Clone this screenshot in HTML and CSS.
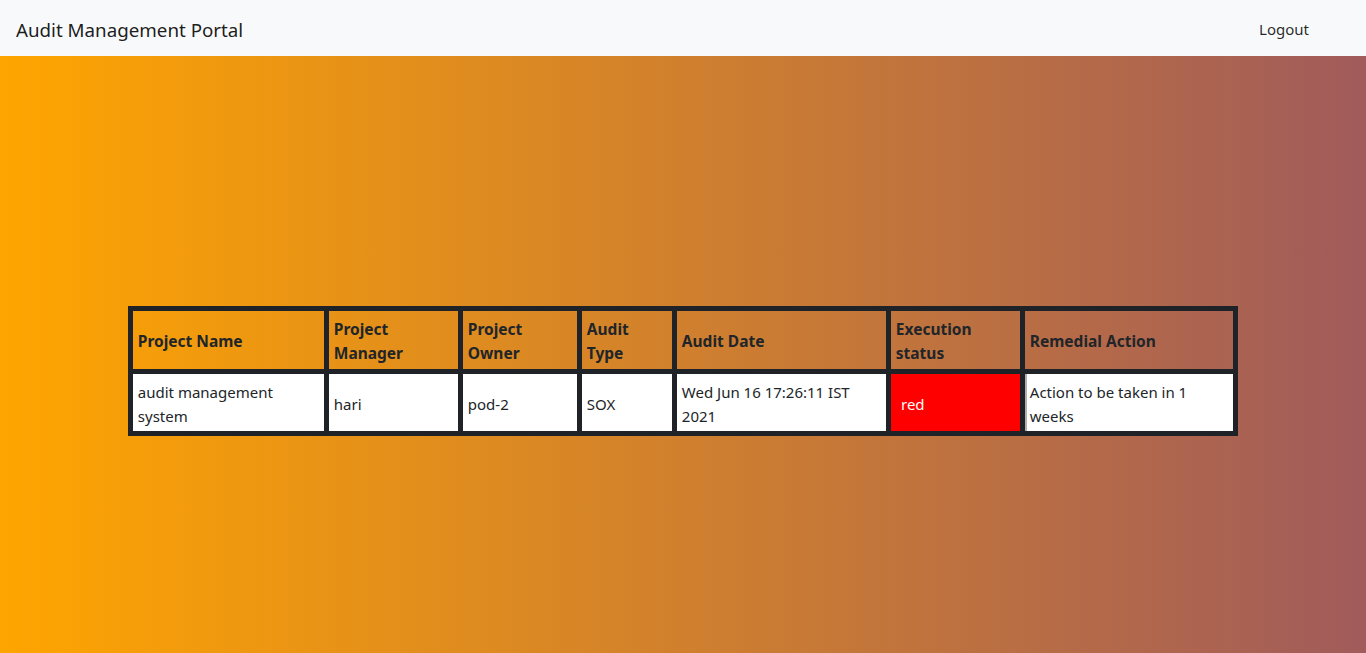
FILE: index.html
```html
<!DOCTYPE html>
<html lang="en">
<head>
<meta charset="utf-8">
<title>Audit Management Portal</title>
<link rel="stylesheet" href="styles.css">
</head>
<body>
<nav class="navbar">
  <span class="brand">Audit Management Portal</span>
  <a class="nav-link" href="#">Logout</a>
</nav>
<main class="page">
  <div class="container">
    <table class="audit-table">
      <colgroup>
        <col class="c1"><col class="c2"><col class="c3"><col class="c4"><col class="c5"><col class="c6"><col class="c7">
      </colgroup>
      <thead>
        <tr>
          <th>Project Name</th>
          <th>Project Manager</th>
          <th>Project Owner</th>
          <th>Audit Type</th>
          <th>Audit Date</th>
          <th>Execution status</th>
          <th>Remedial Action</th>
        </tr>
      </thead>
      <tbody>
        <tr>
          <td>audit management system</td>
          <td>hari</td>
          <td>pod-2</td>
          <td>SOX</td>
          <td>Wed Jun 16 17:26:11 IST 2021</td>
          <td class="status-red"><span class="status-text">red</span></td>
          <td class="remedial">Action to be taken in 1 weeks</td>
        </tr>
      </tbody>
    </table>
  </div>
</main>
</body>
</html>
```

FILE: styles.css
```css
* { box-sizing: border-box; }
html, body { margin: 0; padding: 0; height: 100%; }
body {
  font-family: "Noto Sans", "Open Sans", sans-serif;
  font-size: 16px;
  line-height: 1.5;
  color: #212529;
  background: linear-gradient(to right, #ffa500, #a15b5b);
  display: flex;
  flex-direction: column;
}
.navbar {
  height: 56px;
  background: #f8f9fa;
  display: flex;
  align-items: center;
  justify-content: space-between;
  padding: 0 57px 0 16px;
  flex: none;
}
.brand {
  font-size: 18.75px;
  line-height: 30px;
  color: rgba(0,0,0,.9);
  padding-top: 4px;
}
.nav-link {
  font-size: 15px;
  color: rgba(0,0,0,.85);
  text-decoration: none;
  padding-top: 2px;
}
.page { flex: 1; }
.container {
  width: 1110px;
  margin: 250px auto 0;
}
.audit-table {
  width: 1110px;
  border-collapse: collapse;
  table-layout: fixed;
  border: 5px solid #1f2226;
  font-size: 15px;
}
.c1 { width: 196px; }
.c2 { width: 134px; }
.c3 { width: 119px; }
.c4 { width: 95px; }
.c5 { width: 214px; }
.c6 { width: 134px; }
.c7 { width: 213px; }
.audit-table th,
.audit-table td {
  border: 5px solid #1f2226;
  padding: 5.5px 4.8px 4.1px;
  vertical-align: middle;
  text-align: left;
  line-height: 24px;
}
.audit-table th {
  font-weight: 700;
  font-size: 15.5px;
  color: #212529;
  height: 58px;
}
.audit-table td {
  background: #fff;
  color: #212529;
  height: 59px;
  padding-top: 6.5px;
  padding-bottom: 3.1px;
}
.audit-table td.status-red {
  background: #ff0000;
  color: #fff;
  padding-left: 10px;
}
.audit-table td.remedial {
  box-shadow: inset 2px 0 0 #b0b0b0;
}
```
